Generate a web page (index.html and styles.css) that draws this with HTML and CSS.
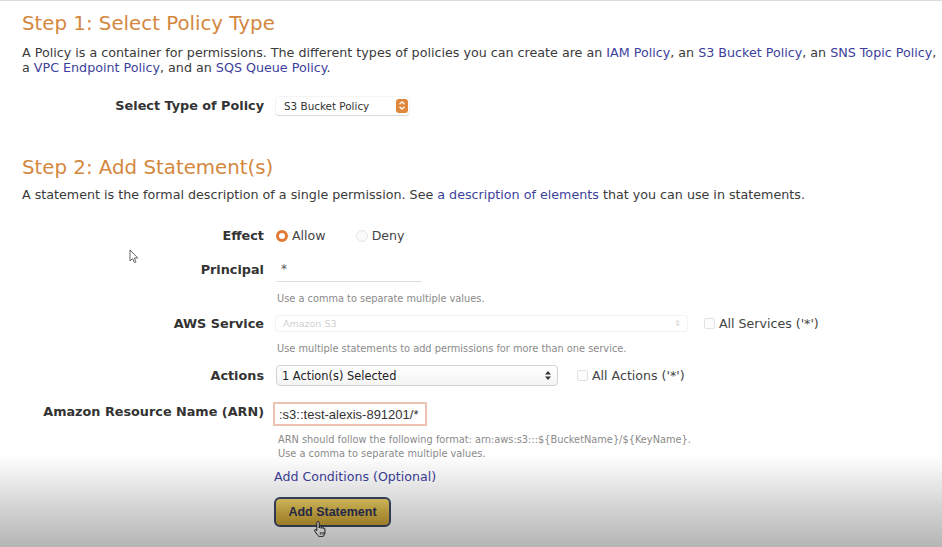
FILE: index.html
```html
<!DOCTYPE html>
<html>
<head>
<meta charset="utf-8">
<link rel="stylesheet" href="styles.css">
</head>
<body>
<div class="page">
  <h1 class="step">Step 1: Select Policy Type</h1>
  <p class="intro">A Policy is a container for permissions. The different types of policies you can create are an <a>IAM Policy</a>, an <a>S3 Bucket Policy</a>, an <a>SNS Topic Policy</a>,<br>a <a>VPC Endpoint Policy</a>, and an <a>SQS Queue Policy</a>.</p>

  <div class="row type-row">
    <div class="label">Select Type of Policy</div>
    <div class="field">
      <div class="type-select">
        <span>S3 Bucket Policy</span>
        <span class="stepper"><svg width="12" height="13" viewBox="0 0 12 13"><path d="M3.5 5.2 6 2.8 8.5 5.2M3.5 7.8 6 10.2 8.5 7.8" fill="none" stroke="#fff" stroke-width="1.3"/></svg></span>
      </div>
    </div>
  </div>

  <h1 class="step step2">Step 2: Add Statement(s)</h1>
  <p class="intro2">A statement is the formal description of a single permission. See <a>a description of elements</a> that you can use in statements.</p>

  <div class="form">
    <div class="row effect-row">
      <div class="label">Effect</div>
      <div class="field">
        <span class="radio on"></span><span class="opt">Allow</span>
        <span class="radio off"></span><span class="opt">Deny</span>
      </div>
    </div>

    <div class="row principal-row">
      <div class="label">Principal</div>
      <div class="field"><div class="principal">*</div></div>
    </div>
    <div class="hint hint1">Use a comma to separate multiple values.</div>

    <div class="row service-row">
      <div class="label">AWS Service</div>
      <div class="field">
        <div class="service-select"><span>Amazon S3</span><span class="arrows light">&#8661;</span></div>
        <span class="check"></span><span class="opt">All Services ('*')</span>
      </div>
    </div>
    <div class="hint hint2">Use multiple statements to add permissions for more than one service.</div>

    <div class="row actions-row">
      <div class="label">Actions</div>
      <div class="field">
        <div class="actions-select"><span>1 Action(s) Selected</span><svg class="updown" width="6" height="9" viewBox="0 0 6 9"><path d="M3 0 6 3.5H0ZM3 9 0 5.5H6Z" fill="#333"/></svg></div>
        <span class="check"></span><span class="opt">All Actions ('*')</span>
      </div>
    </div>

    <div class="row arn-row">
      <div class="label">Amazon Resource Name (ARN)</div>
      <div class="field"><div class="arn-input">:s3::test-alexis-891201/*</div></div>
    </div>
    <div class="hint hint3">ARN should follow the following format: arn:aws:s3:::${BucketName}/${KeyName}.<br>Use a comma to separate multiple values.</div>

    <div class="conditions"><a>Add Conditions (Optional)</a></div>
    <div class="btn-wrap"><button class="add-btn">Add Statement</button></div>
  </div>
</div>

<svg class="cursor-arrow" width="10" height="15" viewBox="0 0 10 15"><path d="M1 1 1 12 3.6 9.6 5.4 13.6 7 12.9 5.3 9 8.8 9Z" fill="#fff" stroke="#666" stroke-width="1"/></svg>
<svg class="cursor-hand" width="16" height="18" viewBox="0 0 16 18"><path d="M5 1.5c.8 0 1.2.5 1.2 1.2V8l.2-1.3c.2-.8 1.6-.8 1.8 0V8.4l.2-1c.3-.8 1.6-.7 1.8.1v1.2c.3-.8 1.6-.7 1.7.2v4.2c0 2-1.2 3.4-3.2 3.4H7.2c-1.4 0-2.1-.6-2.9-1.7L1.6 10.8c-.5-.8.5-1.7 1.3-1L3.8 11V2.7C3.8 2 4.2 1.5 5 1.5Z" fill="#fff" stroke="#222" stroke-width="1"/><path d="M7.3 12v2.6M9 12v2.6M10.7 12v2.6" stroke="#222" stroke-width=".8"/></svg>
<div class="fade"></div>
</body>
</html>
```

FILE: styles.css
```css
html, body {
  margin: 0;
  padding: 0;
  background: #ffffff;
}
body {
  width: 942px;
  height: 547px;
  overflow: hidden;
  position: relative;
  font-family: "DejaVu Sans", Verdana, sans-serif;
  color: #3a3a3a;
}
.page {
  border-top: 1px solid #dcdcdc;
  padding-left: 22px;
}
a {
  color: #3c3f9c;
  text-decoration: none;
}
.step {
  margin: 11px 0 0;
  font-size: 19.8px;
  line-height: 24px;
  font-weight: normal;
  color: #d4883f;
}
.step2 {
  margin-top: 40px;
}
.intro {
  margin: 8.5px 0 0;
  font-size: 12.7px;
  line-height: 15px;
  white-space: nowrap;
}
.intro2 {
  margin: 7px 0 0;
  font-size: 12.7px;
  line-height: 15px;
  white-space: nowrap;
}
.row {
  display: flex;
  align-items: center;
}
.label {
  width: 242px;
  flex: none;
  text-align: right;
  font-weight: bold;
  font-size: 12.8px;
  color: #333;
}
.field {
  margin-left: 11px;
  display: flex;
  align-items: center;
  font-size: 12.6px;
  color: #444;
}
.type-row {
  margin-top: 21px;
  height: 20px;
}
.type-select {
  width: 133px;
  height: 18px;
  margin-left: 1px;
  box-sizing: border-box;
  display: flex;
  align-items: center;
  justify-content: space-between;
  padding: 0 1px 0 8px;
  border-radius: 3px;
  box-shadow: 0 1px 1px rgba(0,0,0,0.12), 0 0 0 1px rgba(0,0,0,0.04);
  font-size: 10.4px;
  color: #333;
}
.stepper {
  width: 12px;
  height: 14px;
  border-radius: 3px;
  background: #e0873b;
  display: flex;
  align-items: center;
  justify-content: center;
}
.form {
  margin-top: 24px;
}
.effect-row {
  height: 20px;
}
.radio {
  width: 12px;
  height: 12px;
  border-radius: 50%;
  box-sizing: border-box;
  flex: none;
}
.radio.on {
  margin-left: 1px;
  border: 3.5px solid #e07a36;
  background: #fff;
}
.radio.off {
  margin-left: 30px;
  border: 1px solid #e6e6e6;
  background: #fafafa;
}
.opt {
  margin-left: 4px;
  color: #444;
}
.principal-row {
  margin-top: 12px;
  height: 24px;
}
.principal {
  width: 146px;
  height: 24px;
  margin-left: 1px;
  box-sizing: border-box;
  border-bottom: 1px solid #dedede;
  padding: 4px 0 0 5px;
  font-size: 12px;
  color: #555;
}
.hint {
  margin-left: 255px;
  font-size: 9.8px;
  color: #8a8a8a;
  line-height: 15px;
}
.hint1 {
  margin-top: 9.5px;
}
.service-row {
  margin-top: 7.5px;
  height: 20px;
}
.service-select {
  width: 411px;
  height: 15px;
  margin-left: 1px;
  box-sizing: border-box;
  display: flex;
  align-items: center;
  justify-content: space-between;
  padding: 0 6px 0 7px;
  border-radius: 3px;
  box-shadow: 0 0 0 1px #f3f3f3;
  font-size: 9.5px;
  color: #d0d0d0;
}
.arrows.light {
  font-size: 8px;
  color: #cfcfcf;
}
.check {
  width: 11px;
  height: 11px;
  box-sizing: border-box;
  border: 1px solid #e2e2e2;
  border-radius: 2px;
  background: #fcfcfc;
  flex: none;
}
.service-row .check {
  margin-left: 17px;
}
.hint2 {
  margin-top: 7.5px;
}
.actions-row {
  margin-top: 8.5px;
  height: 22px;
}
.actions-select {
  width: 282px;
  height: 21px;
  margin-left: 1px;
  box-sizing: border-box;
  display: flex;
  align-items: center;
  justify-content: space-between;
  padding: 0 6px 0 5px;
  border: 1px solid #d2d2d2;
  border-radius: 4px;
  background: linear-gradient(#ffffff, #f4f4f4);
  font-size: 11.4px;
  color: #222;
}
.actions-row .check {
  margin-left: 19px;
}
.arn-row {
  margin-top: 15px;
  height: 24px;
  align-items: flex-start;
}
.arn-row .label {
  padding-top: 2px;
}
.arn-input {
  width: 154px;
  height: 24px;
  margin-left: -2px;
  box-sizing: border-box;
  border: 2px solid #ecc3b3;
  padding: 3px 0 0 4px;
  font-family: "Liberation Sans", Arial, sans-serif;
  font-size: 13px;
  color: #333;
  background: #fff;
}
.hint3 {
  margin-top: 7px;
  margin-left: 256px;
  line-height: 14px;
}
.conditions {
  margin-top: 8px;
  margin-left: 252px;
  font-size: 12.6px;
  line-height: 16px;
}
.btn-wrap {
  margin-top: 12px;
  margin-left: 252px;
}
.add-btn {
  width: 117px;
  height: 30px;
  box-sizing: border-box;
  border: 2px solid #3d4766;
  border-radius: 6px;
  background: linear-gradient(#f0d468, #d8b445 55%, #c9a236);
  font-family: "Liberation Sans", Arial, sans-serif;
  font-weight: bold;
  font-size: 12.5px;
  color: #2c3158;
  padding: 0;
}
.cursor-arrow {
  position: absolute;
  left: 129px;
  top: 249px;
}
.cursor-hand {
  position: absolute;
  left: 313px;
  top: 520px;
}
.fade {
  position: absolute;
  left: 0;
  right: 0;
  top: 455px;
  bottom: 0;
  background: linear-gradient(rgba(0,0,0,0), rgba(0,0,0,0.06) 20%, rgba(0,0,0,0.18) 60%, rgba(0,0,0,0.29));
  pointer-events: none;
}
```
